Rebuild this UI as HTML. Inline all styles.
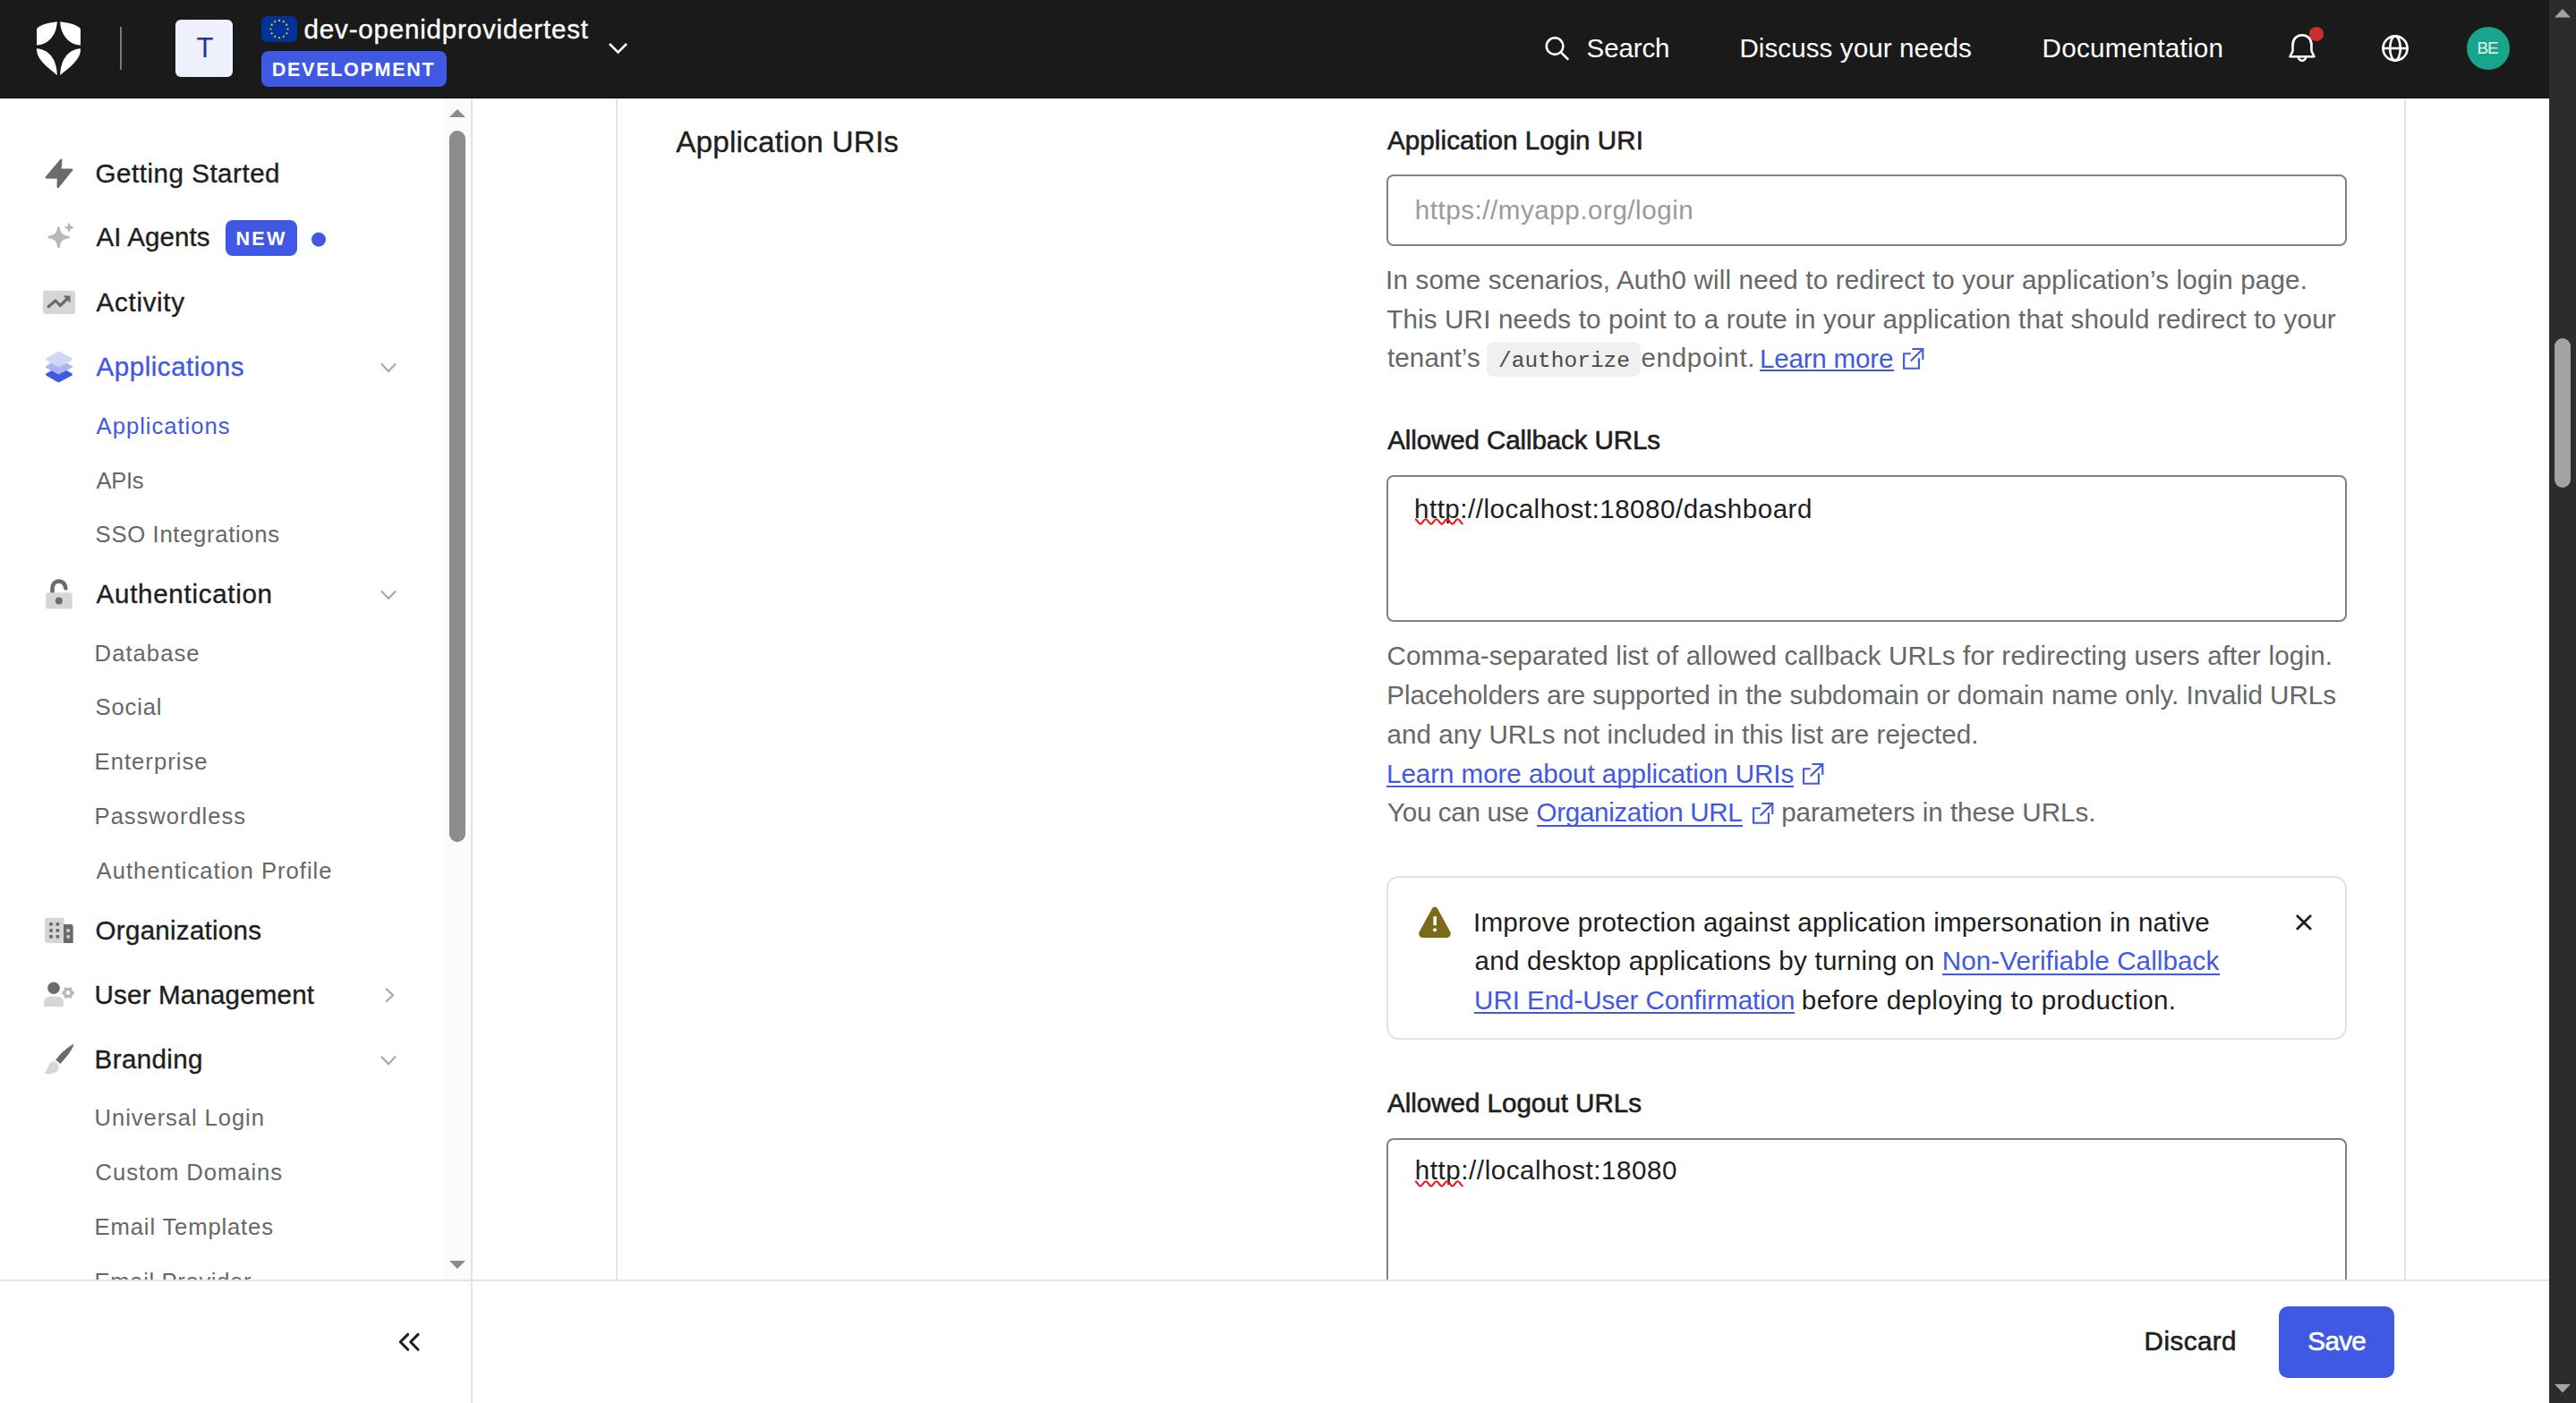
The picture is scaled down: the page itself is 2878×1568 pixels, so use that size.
<!DOCTYPE html>
<html><head><meta charset="utf-8"><title>Auth0 Dashboard</title>
<style>
html,body{margin:0;padding:0;width:2878px;height:1568px;overflow:hidden;background:#fff}
body{position:relative;font-family:"Liberation Sans",sans-serif}
.t{position:absolute;white-space:pre;margin:0}
.r{position:absolute;display:block}
</style></head><body>
<div class="r" style="left:0px;top:0px;width:2878px;height:1568px;background:#ffffff;"></div>
<div class="r" style="left:0px;top:0px;width:2848px;height:110px;background:#1a1a1a;"></div>
<div class="r" style="left:0px;top:109px;width:2848px;height:1px;background:#060606;"></div>
<svg class="r" style="left:41px;top:24px;width:49px;height:60px" viewBox="0 0 49 60"><g fill="#fff"><path d="M22.8 0.3 C14 1.2 6 3.5 2 6.2 C0.6 7.2 0 8.2 0 9.8 L0 26.6 C12 26.2 22.3 16 22.8 0.3 Z"/><path d="M26.2 0.3 C35 1.2 43 3.5 47 6.2 C48.4 7.2 49 8.2 49 9.8 L49 26.6 C37 26.2 26.7 16 26.2 0.3 Z"/><path d="M0 30.2 C13 30.8 22.6 42 22.8 60 C14 53 4 45 1 37 C0.4 35 0 33 0 30.2 Z"/><path d="M49 30.2 C36 30.8 26.4 42 26.2 60 C35 53 45 45 48 37 C48.6 35 49 33 49 30.2 Z"/></g></svg>
<div class="r" style="left:134px;top:30px;width:2px;height:48px;background:#7a7a7a;"></div>
<div class="r" style="left:196px;top:22px;width:64px;height:64px;background:#eef0fb;border-radius:6px;"></div>
<div class="t " style="left:219.50px;top:33.75px;font-size:31.00px;line-height:40px;color:#23388f;">T</div>
<svg class="r" style="left:292px;top:18px;width:40px;height:29px" viewBox="0 0 40 29"><rect width="40" height="29" rx="6" fill="#003399"/><circle cx="20.00" cy="4.90" r="1.1" fill="#ffcc00"/><circle cx="24.80" cy="6.19" r="1.1" fill="#ffcc00"/><circle cx="28.31" cy="9.70" r="1.1" fill="#ffcc00"/><circle cx="29.60" cy="14.50" r="1.1" fill="#ffcc00"/><circle cx="28.31" cy="19.30" r="1.1" fill="#ffcc00"/><circle cx="24.80" cy="22.81" r="1.1" fill="#ffcc00"/><circle cx="20.00" cy="24.10" r="1.1" fill="#ffcc00"/><circle cx="15.20" cy="22.81" r="1.1" fill="#ffcc00"/><circle cx="11.69" cy="19.30" r="1.1" fill="#ffcc00"/><circle cx="10.40" cy="14.50" r="1.1" fill="#ffcc00"/><circle cx="11.69" cy="9.70" r="1.1" fill="#ffcc00"/><circle cx="15.20" cy="6.19" r="1.1" fill="#ffcc00"/></svg>
<div class="t " style="left:339.60px;top:13.54px;font-size:29.60px;line-height:38px;color:#ffffff;letter-spacing:0.781px;-webkit-text-stroke:0.35px #ffffff;">dev-openidprovidertest</div>
<div class="r" style="left:292px;top:57px;width:207px;height:40px;background:#3f59e4;border-radius:8px;"></div>
<div class="t " style="left:303.80px;top:63.51px;font-size:21.60px;line-height:28px;color:#ffffff;letter-spacing:1.660px;font-weight:700;">DEVELOPMENT</div>
<svg class="r" style="left:678px;top:46px;width:26px;height:17px" viewBox="0 0 26 17"><path d="M3 3 L12.5 12.5 L22 3" fill="none" stroke="#fff" stroke-width="2.6"/></svg>
<svg class="r" style="left:1724px;top:38px;width:32px;height:32px" viewBox="0 0 32 32"><circle cx="13.1" cy="13.6" r="9.3" fill="none" stroke="#fff" stroke-width="2.6"/><path d="M19.8 20.3 L28.2 28.7" stroke="#fff" stroke-width="2.6"/></svg>
<div class="t " style="left:1772.60px;top:34.74px;font-size:29.60px;line-height:38px;color:#ffffff;letter-spacing:-0.160px;">Search</div>
<div class="t " style="left:1943.40px;top:34.74px;font-size:29.60px;line-height:38px;color:#ffffff;letter-spacing:0.071px;">Discuss your needs</div>
<div class="t " style="left:2281.50px;top:34.74px;font-size:29.60px;line-height:38px;color:#ffffff;letter-spacing:0.283px;">Documentation</div>
<svg class="r" style="left:2554px;top:36px;width:36px;height:36px" viewBox="0 0 36 36"><path d="M4.5 27.2 L7.5 21 L7.5 14.5 C7.5 7.5 12 3.3 18 3.3 C24 3.3 28.5 7.5 28.5 14.5 L28.5 21 L31.5 27.2 Z" fill="none" stroke="#fff" stroke-width="2.6" stroke-linejoin="round"/><path d="M14 27.7 A4 4 0 0 0 22 27.7" fill="none" stroke="#fff" stroke-width="2.6"/></svg>
<svg class="r" style="left:2579px;top:29px;width:18px;height:18px" viewBox="0 0 18 18"><circle cx="9" cy="9" r="8.1" fill="#c8302b"/></svg>
<svg class="r" style="left:2658px;top:36px;width:36px;height:36px" viewBox="0 0 36 36"><circle cx="18" cy="18" r="13.6" fill="none" stroke="#fff" stroke-width="2.6"/><ellipse cx="18" cy="18" rx="5.8" ry="13.6" fill="none" stroke="#fff" stroke-width="2.6"/><path d="M4.4 18 L31.6 18" stroke="#fff" stroke-width="2.6"/></svg>
<div class="r" style="left:2756px;top:30px;width:48px;height:48px;background:#17a68c;border-radius:24px;"></div>
<div class="t " style="left:2767.50px;top:40.95px;font-size:18.90px;line-height:25px;color:#e8f6f2;letter-spacing:-1.200px;">BE</div>
<div class="r" style="left:2848px;top:0px;width:30px;height:1568px;background:#2c2c2c;"></div>
<svg class="r" style="left:2848px;top:0px;width:30px;height:30px" viewBox="0 0 30 30"><path d="M6 19.5 L15 10 L24 19.5 Z" fill="#a3a3a3"/></svg>
<svg class="r" style="left:2848px;top:1538px;width:30px;height:30px" viewBox="0 0 30 30"><path d="M6 9 L15 18.5 L24 9 Z" fill="#a3a3a3"/></svg>
<div class="r" style="left:2854px;top:378px;width:18px;height:167px;background:#a3a3a3;border-radius:9px;"></div>
<div class="r" style="left:526px;top:110px;width:2px;height:1458px;background:#e4e4e4;"></div>
<div class="r" style="left:496px;top:110px;width:30px;height:1321px;background:#fbfbfb;"></div>
<svg class="r" style="left:496px;top:116px;width:30px;height:20px" viewBox="0 0 30 20"><path d="M6 15 L15 6 L24 15 Z" fill="#8c8c8c"/></svg>
<svg class="r" style="left:496px;top:1403px;width:30px;height:20px" viewBox="0 0 30 20"><path d="M6 6 L15 15 L24 6 Z" fill="#8c8c8c"/></svg>
<div class="r" style="left:502px;top:146px;width:18px;height:795px;background:#8c8c8c;border-radius:9px;"></div>
<div class="t " style="left:106.60px;top:174.54px;font-size:29.60px;line-height:38px;color:#1e1e1e;letter-spacing:0.493px;-webkit-text-stroke:0.35px #1e1e1e;">Getting Started</div>
<div class="t " style="left:107.60px;top:246.34px;font-size:29.60px;line-height:38px;color:#1e1e1e;letter-spacing:0.038px;-webkit-text-stroke:0.35px #1e1e1e;">AI Agents</div>
<div class="t " style="left:107.60px;top:318.64px;font-size:29.60px;line-height:38px;color:#1e1e1e;letter-spacing:0.679px;-webkit-text-stroke:0.35px #1e1e1e;">Activity</div>
<div class="t " style="left:107.60px;top:390.64px;font-size:29.60px;line-height:38px;color:#3f59e4;letter-spacing:0.491px;-webkit-text-stroke:0.35px #3f59e4;">Applications</div>
<div class="t " style="left:107.60px;top:644.64px;font-size:29.60px;line-height:38px;color:#1e1e1e;letter-spacing:0.685px;-webkit-text-stroke:0.35px #1e1e1e;">Authentication</div>
<div class="t " style="left:106.60px;top:1020.94px;font-size:29.60px;line-height:38px;color:#1e1e1e;letter-spacing:0.238px;-webkit-text-stroke:0.35px #1e1e1e;">Organizations</div>
<div class="t " style="left:105.60px;top:1093.04px;font-size:29.60px;line-height:38px;color:#1e1e1e;letter-spacing:0.143px;-webkit-text-stroke:0.35px #1e1e1e;">User Management</div>
<div class="t " style="left:105.60px;top:1164.84px;font-size:29.60px;line-height:38px;color:#1e1e1e;letter-spacing:0.357px;-webkit-text-stroke:0.35px #1e1e1e;">Branding</div>
<div class="t " style="left:107.60px;top:459.79px;font-size:25.70px;line-height:33px;color:#3f59e4;letter-spacing:0.945px;">Applications</div>
<div class="t " style="left:107.60px;top:520.59px;font-size:25.70px;line-height:33px;color:#676767;letter-spacing:-0.417px;">APIs</div>
<div class="t " style="left:106.60px;top:580.99px;font-size:25.70px;line-height:33px;color:#676767;letter-spacing:0.653px;">SSO Integrations</div>
<div class="t " style="left:105.60px;top:713.69px;font-size:25.70px;line-height:33px;color:#676767;letter-spacing:1.000px;">Database</div>
<div class="t " style="left:106.60px;top:774.19px;font-size:25.70px;line-height:33px;color:#676767;letter-spacing:0.800px;">Social</div>
<div class="t " style="left:105.60px;top:834.99px;font-size:25.70px;line-height:33px;color:#676767;letter-spacing:0.983px;">Enterprise</div>
<div class="t " style="left:105.60px;top:895.89px;font-size:25.70px;line-height:33px;color:#676767;letter-spacing:0.905px;">Passwordless</div>
<div class="t " style="left:107.60px;top:957.29px;font-size:25.70px;line-height:33px;color:#676767;letter-spacing:0.960px;">Authentication Profile</div>
<div class="t " style="left:105.60px;top:1233.29px;font-size:25.70px;line-height:33px;color:#676767;letter-spacing:0.882px;">Universal Login</div>
<div class="t " style="left:106.60px;top:1294.19px;font-size:25.70px;line-height:33px;color:#676767;letter-spacing:0.877px;">Custom Domains</div>
<div class="t " style="left:105.60px;top:1355.29px;font-size:25.70px;line-height:33px;color:#676767;letter-spacing:0.818px;">Email Templates</div>
<div class="r" style="left:0;top:1380px;width:496px;height:51px;overflow:hidden">
<div class="t " style="left:105.60px;top:36.09px;font-size:25.70px;line-height:33px;color:#676767;letter-spacing:0.608px;">Email Provider</div>
</div>
<div class="r" style="left:252px;top:246px;width:80px;height:40px;background:#3f59e4;border-radius:8px;"></div>
<div class="t " style="left:263.40px;top:252.51px;font-size:21.60px;line-height:28px;color:#ffffff;letter-spacing:2.300px;font-weight:700;">NEW</div>
<svg class="r" style="left:346px;top:258px;width:20px;height:20px" viewBox="0 0 20 20"><circle cx="10" cy="9.7" r="8" fill="#3f59e4"/></svg>
<svg class="r" style="left:422px;top:402px;width:24px;height:18px" viewBox="0 0 24 18"><path d="M4 4.5 L12 13.0 L20 4.5" fill="none" stroke="#a8a8a8" stroke-width="2.2"/></svg>
<svg class="r" style="left:422px;top:656px;width:24px;height:18px" viewBox="0 0 24 18"><path d="M4 4.5 L12 13.0 L20 4.5" fill="none" stroke="#a8a8a8" stroke-width="2.2"/></svg>
<svg class="r" style="left:422px;top:1176px;width:24px;height:18px" viewBox="0 0 24 18"><path d="M4 4.7 L12 13.2 L20 4.7" fill="none" stroke="#a8a8a8" stroke-width="2.2"/></svg>
<svg class="r" style="left:426px;top:1100px;width:18px;height:24px" viewBox="0 0 18 24"><path d="M5 4.8 L13 12.3 L5 19.7" fill="none" stroke="#a8a8a8" stroke-width="2.2"/></svg>
<svg class="r" style="left:40px;top:170px;width:50px;height:50px" viewBox="0 0 50 50"><path d="M28.3 8.7 L27.4 19.5 L40.2 19.7 L24.7 38.9 L25 28.6 L11.8 28.3 Z" fill="#6b6b6b" stroke="#6b6b6b" stroke-width="2.4" stroke-linejoin="round"/></svg>
<svg class="r" style="left:40px;top:240px;width:50px;height:50px" viewBox="0 0 50 50"><path d="M25.5 14.2 C26.4 21 29 23.9 36.8 25 C29 26.1 26.4 29 25.5 36.1 C24.6 29 22 26.1 14.5 25 C22 23.9 24.6 21 25.5 14.2 Z" fill="#b8b8b8" stroke="#b8b8b8" stroke-width="2.4" stroke-linejoin="round"/><path d="M37.2 10.1 C37.6 12.8 38.5 13.9 41.4 14.3 C38.5 14.7 37.6 15.8 37.2 18.5 C36.8 15.8 35.9 14.7 33 14.3 C35.9 13.9 36.8 12.8 37.2 10.1 Z" fill="#b8b8b8" stroke="#b8b8b8" stroke-width="1.6" stroke-linejoin="round"/></svg>
<svg class="r" style="left:40px;top:320px;width:50px;height:40px" viewBox="0 0 50 40"><rect x="8" y="4.8" width="36" height="26.2" rx="3" fill="#d6d6d6"/><path d="M14.1 22.8 L22.1 16 L27.2 21.5 L36 13" fill="none" stroke="#6b6b6b" stroke-width="3.2" stroke-linecap="round" stroke-linejoin="round"/><path d="M30.5 10.4 L38.5 10.4 L38.5 18.5 Z" fill="#6b6b6b"/></svg>
<svg class="r" style="left:40px;top:385px;width:50px;height:50px" viewBox="0 0 50 50"><path d="M25.5 25.6 L39.6 33.5 L25.5 41 L12.4 33.5 Z" fill="#3f59e4" stroke="#3f59e4" stroke-width="2.6" stroke-linejoin="round"/><path d="M25.5 17.2 L39.6 24.8 L25.5 32.2 L12.4 24.8 Z" fill="#aab5f1" stroke="#aab5f1" stroke-width="2.6" stroke-linejoin="round"/><path d="M25.5 9 L39.6 16.5 L25.5 24 L12.4 16.5 Z" fill="#d1d7f8" stroke="#d1d7f8" stroke-width="2.6" stroke-linejoin="round"/></svg>
<svg class="r" style="left:40px;top:640px;width:50px;height:50px" viewBox="0 0 50 50"><path d="M18.5 22.5 L18.5 17.5 C18.5 12.6 21.8 9.6 25.8 9.6 C29.8 9.6 33 12.6 33.4 17.4" fill="none" stroke="#6b6b6b" stroke-width="4.6" stroke-linecap="round"/><rect x="11.2" y="22.3" width="29.6" height="18.3" rx="3.2" fill="#d6d6d6"/><circle cx="25.8" cy="31.4" r="4" fill="#6b6b6b"/></svg>
<svg class="r" style="left:40px;top:1020px;width:50px;height:40px" viewBox="0 0 50 40"><rect x="10.2" y="5.7" width="21.5" height="28.2" rx="2.5" fill="#d6d6d6"/><path d="M31 12.9 L39.2 12.9 Q41.7 12.9 41.7 15.4 L41.7 33.9 L31 33.9 Z" fill="#6b6b6b"/><rect x="15.2" y="11.1" width="3.6" height="3.6" fill="#6b6b6b"/><rect x="15.2" y="18.1" width="3.6" height="3.6" fill="#6b6b6b"/><rect x="15.2" y="25.0" width="3.6" height="3.6" fill="#6b6b6b"/><rect x="22.6" y="11.1" width="3.6" height="3.6" fill="#6b6b6b"/><rect x="22.6" y="18.1" width="3.6" height="3.6" fill="#6b6b6b"/><rect x="22.6" y="25.0" width="3.6" height="3.6" fill="#6b6b6b"/><rect x="34.5" y="18.3" width="3.4" height="3.4" fill="#d6d6d6"/><rect x="34.5" y="25.2" width="3.4" height="3.4" fill="#d6d6d6"/></svg>
<svg class="r" style="left:40px;top:1090px;width:50px;height:40px" viewBox="0 0 50 40"><circle cx="20" cy="14.3" r="6.8" fill="#6b6b6b"/><path d="M9.2 35 L9.2 30.5 C9.2 26 12 23.8 16 23.8 L24 23.8 C28 23.8 30.9 26 30.9 30.5 L30.9 35 Z" fill="#d6d6d6"/><g transform="translate(36.1 19.6)"><circle r="3.9" fill="none" stroke="#b8b8b8" stroke-width="3.2"/><rect x="-1.6" y="-6.7" width="3.2" height="2.9" fill="#b8b8b8" transform="rotate(30)"/><rect x="-1.6" y="-6.7" width="3.2" height="2.9" fill="#b8b8b8" transform="rotate(90)"/><rect x="-1.6" y="-6.7" width="3.2" height="2.9" fill="#b8b8b8" transform="rotate(150)"/><rect x="-1.6" y="-6.7" width="3.2" height="2.9" fill="#b8b8b8" transform="rotate(210)"/><rect x="-1.6" y="-6.7" width="3.2" height="2.9" fill="#b8b8b8" transform="rotate(270)"/><rect x="-1.6" y="-6.7" width="3.2" height="2.9" fill="#b8b8b8" transform="rotate(330)"/></g></svg>
<svg class="r" style="left:40px;top:1160px;width:50px;height:50px" viewBox="0 0 50 50"><path d="M22.1 24.6 C27 18 35 10.5 41.2 7.2 Q42.6 7 42.2 8.6 C40 14.5 33 23 27.5 29 Z" fill="#6b6b6b"/><path d="M9.3 39.6 C12.5 37 13 33 14.5 30 C16 27 18.5 26.5 20.5 26.6 C23.5 26.8 25.7 29.5 25.6 32.6 C25.5 37 22 39.5 17 40.3 C14 40.7 11.5 40.4 9.3 39.6 Z" fill="#d6d6d6"/></svg>
<div class="r" style="left:0px;top:1430px;width:2848px;height:2px;background:#e4e4e4;"></div>
<svg class="r" style="left:440px;top:1485px;width:34px;height:30px" viewBox="0 0 34 30"><path d="M15.7 6.4 L7.3 14.8 L15.7 23.3" fill="none" stroke="#1e1e1e" stroke-width="3" stroke-linecap="round" stroke-linejoin="round"/><path d="M27.1 6.4 L18.7 14.8 L27.1 23.3" fill="none" stroke="#1e1e1e" stroke-width="3" stroke-linecap="round" stroke-linejoin="round"/></svg>
<div class="r" style="left:688px;top:110px;width:2px;height:1321px;background:#e4e4e4;"></div>
<div class="r" style="left:2686px;top:110px;width:2px;height:1321px;background:#e4e4e4;"></div>
<div class="t " style="left:755.20px;top:137.36px;font-size:33.30px;line-height:43px;color:#1e1e1e;letter-spacing:0.177px;-webkit-text-stroke:0.35px #1e1e1e;">Application URIs</div>
<div class="t " style="left:1550.00px;top:138.04px;font-size:29.60px;line-height:38px;color:#1e1e1e;letter-spacing:0.068px;-webkit-text-stroke:0.6px #1e1e1e;">Application Login URI</div>
<div class="r" style="left:1549px;top:195px;width:1073px;height:80px;border:2px solid #828282;background:transparent;box-sizing:border-box;border-radius:8px;"></div>
<div class="t " style="left:1580.80px;top:215.64px;font-size:29.60px;line-height:38px;color:#9a9a9a;letter-spacing:0.525px;">https://myapp.org/login</div>
<div class="t " style="left:1548.10px;top:293.64px;font-size:29.60px;line-height:38px;color:#676767;letter-spacing:0.153px;">In some scenarios, Auth0 will need to redirect to your application’s login page.</div>
<div class="t " style="left:1549.20px;top:337.54px;font-size:29.60px;line-height:38px;color:#676767;letter-spacing:0.153px;">This URI needs to point to a route in your application that should redirect to your</div>
<div class="t " style="left:1550.00px;top:381.44px;font-size:29.60px;line-height:38px;color:#676767;letter-spacing:0.093px;">tenant’s</div>
<div class="r" style="left:1661px;top:382px;width:172px;height:39px;background:#f0f0f0;border-radius:8px;"></div>
<div class="t " style="left:1674.00px;top:388.08px;font-size:24.50px;line-height:32px;color:#4a4a4a;font-family:'Liberation Mono',monospace;">/authorize</div>
<div class="t " style="left:1833.50px;top:381.44px;font-size:29.60px;line-height:38px;color:#676767;letter-spacing:0.650px;">endpoint.</div>
<div class="t " style="left:1965.90px;top:381.54px;font-size:29.60px;line-height:38px;color:#3f59e4;letter-spacing:-0.206px;">Learn more</div>
<div class="r" style="left:1966px;top:413px;width:150px;height:2px;background:#3f59e4;"></div>
<svg class="r" style="left:2125px;top:388.3px;width:26px;height:26px" viewBox="0 0 26 26"><path d="M9.9 7.3 L2.1 7.3 L2.1 23.7 L18.9 23.7 L18.9 12.3" fill="none" stroke="#3f59e4" stroke-width="2.1"/><path d="M11.4 2 L23.3 2 L23.3 13.9" fill="none" stroke="#3f59e4" stroke-width="2.1"/><path d="M23 2.3 L9.7 15.6" fill="none" stroke="#3f59e4" stroke-width="2.1"/></svg>
<div class="t " style="left:1550.20px;top:473.44px;font-size:29.60px;line-height:38px;color:#1e1e1e;letter-spacing:-0.133px;-webkit-text-stroke:0.6px #1e1e1e;">Allowed Callback URLs</div>
<div class="r" style="left:1549px;top:531px;width:1073px;height:164px;border:2px solid #828282;background:transparent;box-sizing:border-box;border-radius:8px;"></div>
<div class="t " style="left:1580.00px;top:549.74px;font-size:29.60px;line-height:38px;color:#1e1e1e;letter-spacing:0.482px;">http://localhost:18080/dashboard</div>
<svg class="r" style="left:1580px;top:579px;width:57px;height:9px" viewBox="0 0 57 9"><path d="M0 1.3 C2.38 1.3 3.57 6.6 5.95 6.6 C8.33 6.6 9.52 1.3 11.90 1.3 C14.28 1.3 15.47 6.6 17.85 6.6 C20.23 6.6 21.42 1.3 23.80 1.3 C26.18 1.3 27.37 6.6 29.75 6.6 C32.13 6.6 33.32 1.3 35.70 1.3 C38.08 1.3 39.27 6.6 41.65 6.6 C44.03 6.6 45.22 1.3 47.60 1.3 C49.98 1.3 51.17 6.6 53.55 6.6" transform="translate(1 0)" fill="none" stroke="#f01018" stroke-width="2.1"/></svg>
<div class="t " style="left:1549.40px;top:713.64px;font-size:29.60px;line-height:38px;color:#676767;letter-spacing:0.154px;">Comma-separated list of allowed callback URLs for redirecting users after login.</div>
<div class="t " style="left:1549.30px;top:757.54px;font-size:29.60px;line-height:38px;color:#676767;letter-spacing:-0.018px;">Placeholders are supported in the subdomain or domain name only. Invalid URLs</div>
<div class="t " style="left:1549.40px;top:801.54px;font-size:29.60px;line-height:38px;color:#676767;letter-spacing:0.062px;">and any URLs not included in this list are rejected.</div>
<div class="t " style="left:1549.10px;top:845.54px;font-size:29.60px;line-height:38px;color:#3f59e4;letter-spacing:-0.069px;">Learn more about application URIs</div>
<div class="r" style="left:1549px;top:877.5px;width:455.29999999999995px;height:2.0px;background:#3f59e4;"></div>
<svg class="r" style="left:2013.3px;top:852px;width:26px;height:26px" viewBox="0 0 26 26"><path d="M9.9 7.3 L2.1 7.3 L2.1 23.7 L18.9 23.7 L18.9 12.3" fill="none" stroke="#3f59e4" stroke-width="2.1"/><path d="M11.4 2 L23.3 2 L23.3 13.9" fill="none" stroke="#3f59e4" stroke-width="2.1"/><path d="M23 2.3 L9.7 15.6" fill="none" stroke="#3f59e4" stroke-width="2.1"/></svg>
<div class="t " style="left:1550.10px;top:889.49px;font-size:29.60px;line-height:38px;color:#676767;letter-spacing:-0.345px;">You can use</div>
<div class="t " style="left:1716.60px;top:889.49px;font-size:29.60px;line-height:38px;color:#3f59e4;letter-spacing:-0.343px;">Organization URL</div>
<div class="r" style="left:1717.2px;top:921.5px;width:229.5px;height:2.0px;background:#3f59e4;"></div>
<svg class="r" style="left:1957.1px;top:896.4px;width:26px;height:26px" viewBox="0 0 26 26"><path d="M9.9 7.3 L2.1 7.3 L2.1 23.7 L18.9 23.7 L18.9 12.3" fill="none" stroke="#3f59e4" stroke-width="2.1"/><path d="M11.4 2 L23.3 2 L23.3 13.9" fill="none" stroke="#3f59e4" stroke-width="2.1"/><path d="M23 2.3 L9.7 15.6" fill="none" stroke="#3f59e4" stroke-width="2.1"/></svg>
<div class="t " style="left:1990.20px;top:889.49px;font-size:29.60px;line-height:38px;color:#676767;letter-spacing:-0.031px;">parameters in these URLs.</div>
<div class="r" style="left:1549px;top:979px;width:1073px;height:183px;border:2px solid #e2e2e2;background:transparent;box-sizing:border-box;border-radius:14px;"></div>
<svg class="r" style="left:1580px;top:1008px;width:46px;height:46px" viewBox="0 0 46 46"><path d="M23 5.5 C21.5 5.5 20.5 6.5 19.5 8.2 L5.8 33.3 C4.4 36 5.8 39.9 9.4 39.9 L36.6 39.9 C40.2 39.9 41.6 36 40.2 33.3 L26.5 8.2 C25.5 6.5 24.5 5.5 23 5.5 Z" fill="#7b6a17"/><rect x="21.4" y="16.2" width="3.6" height="10" fill="#fff"/><circle cx="23" cy="31.3" r="2.1" fill="#fff"/></svg>
<div class="t " style="left:1646.10px;top:1011.74px;font-size:29.60px;line-height:38px;color:#1e1e1e;letter-spacing:0.192px;">Improve protection against application impersonation in native</div>
<div class="t " style="left:1647.50px;top:1055.34px;font-size:29.60px;line-height:38px;color:#1e1e1e;letter-spacing:0.232px;">and desktop applications by turning on</div>
<div class="t " style="left:2169.80px;top:1055.34px;font-size:29.60px;line-height:38px;color:#3f59e4;letter-spacing:0.082px;">Non-Verifiable Callback</div>
<div class="r" style="left:2169.5px;top:1087.5px;width:310.6999999999998px;height:2.0px;background:#3f59e4;"></div>
<div class="t " style="left:1647.10px;top:1099.34px;font-size:29.60px;line-height:38px;color:#3f59e4;letter-spacing:-0.073px;">URI End-User Confirmation</div>
<div class="r" style="left:1646.9px;top:1131.2px;width:358.0999999999999px;height:2.0px;background:#3f59e4;"></div>
<div class="t " style="left:2012.80px;top:1099.34px;font-size:29.60px;line-height:38px;color:#1e1e1e;letter-spacing:0.397px;">before deploying to production.</div>
<svg class="r" style="left:2560px;top:1018px;width:27px;height:27px" viewBox="0 0 27 27"><path d="M6.75 5.7 L21.2 20.1 M21.2 5.7 L6.75 20.1" stroke="#1e1e1e" stroke-width="2.8" stroke-linecap="round"/></svg>
<div class="t " style="left:1550.00px;top:1213.74px;font-size:29.60px;line-height:38px;color:#1e1e1e;letter-spacing:-0.036px;-webkit-text-stroke:0.6px #1e1e1e;">Allowed Logout URLs</div>
<div class="r" style="left:1540px;top:1260px;width:1100px;height:170px;overflow:hidden">
<div class="r" style="left:9px;top:11.5px;width:1073px;height:288.5px;border:2px solid #828282;background:transparent;box-sizing:border-box;border-radius:8px;"></div>
</div>
<div class="t " style="left:1580.80px;top:1289.44px;font-size:29.60px;line-height:38px;color:#1e1e1e;letter-spacing:0.543px;">http://localhost:18080</div>
<svg class="r" style="left:1580px;top:1319.2px;width:57px;height:9px" viewBox="0 0 57 9"><path d="M0 1.3 C2.38 1.3 3.57 6.6 5.95 6.6 C8.33 6.6 9.52 1.3 11.90 1.3 C14.28 1.3 15.47 6.6 17.85 6.6 C20.23 6.6 21.42 1.3 23.80 1.3 C26.18 1.3 27.37 6.6 29.75 6.6 C32.13 6.6 33.32 1.3 35.70 1.3 C38.08 1.3 39.27 6.6 41.65 6.6 C44.03 6.6 45.22 1.3 47.60 1.3 C49.98 1.3 51.17 6.6 53.55 6.6" transform="translate(1 0)" fill="none" stroke="#f01018" stroke-width="2.1"/></svg>
<div class="t " style="left:2395.60px;top:1480.44px;font-size:29.60px;line-height:38px;color:#1e1e1e;letter-spacing:0.442px;-webkit-text-stroke:0.6px #1e1e1e;">Discard</div>
<div class="r" style="left:2546px;top:1460px;width:129px;height:80px;background:#3f59e4;border-radius:10px;"></div>
<div class="t " style="left:2578.30px;top:1480.44px;font-size:29.60px;line-height:38px;color:#ffffff;letter-spacing:-0.650px;-webkit-text-stroke:0.6px #ffffff;">Save</div>
</body></html>
